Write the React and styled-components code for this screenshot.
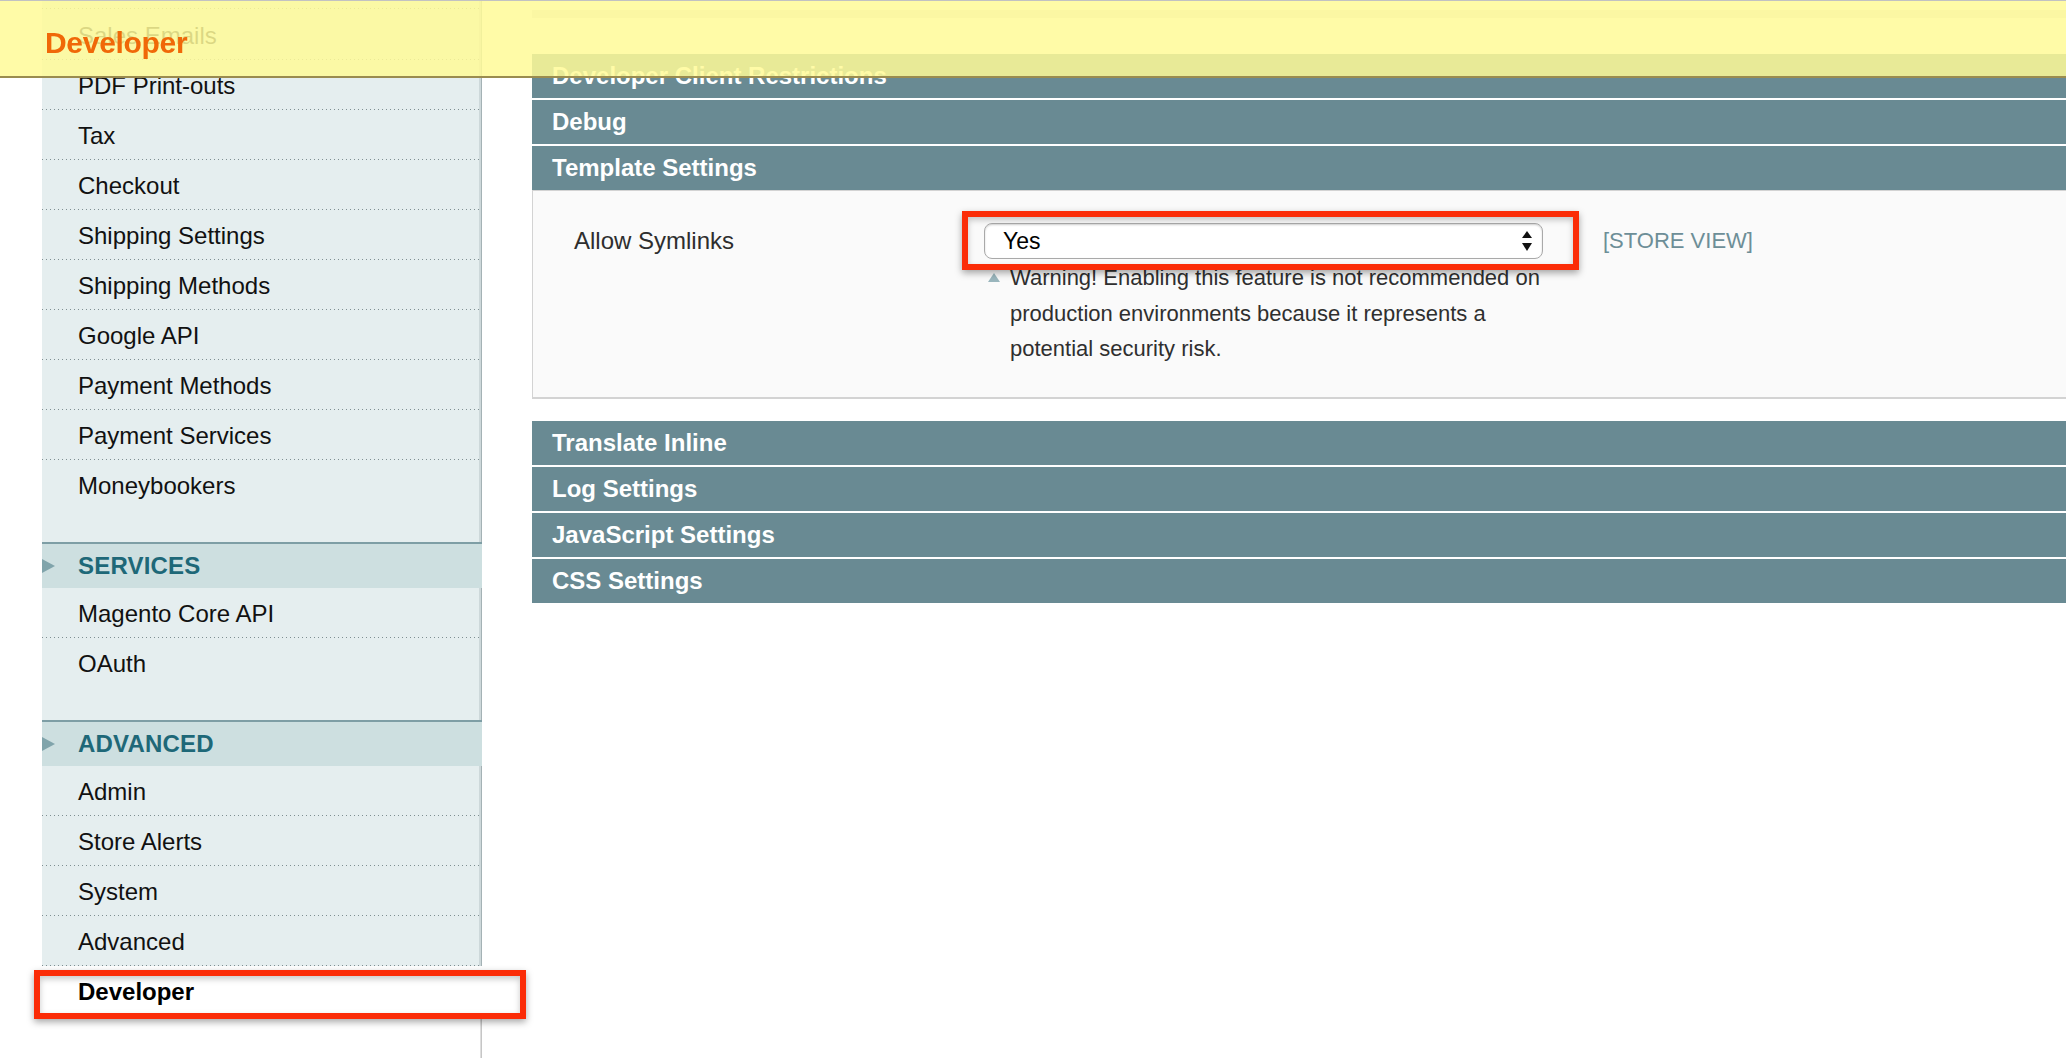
import React from 'react';
import styled, { createGlobalStyle } from 'styled-components';

const GlobalStyle = createGlobalStyle`
  html, body {
    margin: 0;
    padding: 0;
    background: #fff;
    overflow: hidden;
  }
  body {
    font-family: "Liberation Sans", Arial, Helvetica, sans-serif;
    color: #000;
  }
  * { box-sizing: border-box; }
`;

const Page = styled.div`
  display: flex;
  min-height: 100vh;
  padding-left: 42px;
  overflow: hidden;
`;

const FloatingHeader = styled.div`
  position: fixed;
  top: 0;
  left: 0;
  right: 0;
  height: 78px;
  border-top: 1px solid #c2c2c2;
  border-bottom: 2px solid #9a8c4f;
  background: rgba(255, 250, 152, 0.85);
  padding: 27px 0 0 45px;
  z-index: 10;
`;

const FloatingTitle = styled.h3`
  margin: 0;
  font-size: 30px;
  line-height: 1;
  font-weight: bold;
  letter-spacing: -0.3px;
  color: #f06808;
`;

/* ---------- sidebar ---------- */

const Sidebar = styled.aside`
  width: 440px;
  flex-shrink: 0;
  display: flex;
  flex-direction: column;
`;

const Group = styled.ul`
  list-style: none;
  margin: 0;
  padding: ${p => p.$top || 0}px 0 ${p => p.$bottom || 0}px 0;
  background: #e5eeef;
  box-shadow: inset -1px 0 0 #a4b2b5, inset -3px 0 0 #cdd8da;
`;

const dots = 'linear-gradient(to right, #7f8f92 1px, transparent 1px)';

const Item = styled.li`
  position: relative;
  height: 50px;
  line-height: 52px;
  padding-left: 36px;
  font-size: 24px;
  color: ${p => (p.$active ? '#000' : '#111')};
  font-weight: ${p => (p.$active ? 'bold' : 'normal')};
  background: ${p => (p.$active ? '#fff' : 'transparent')};
  background-image: ${p => (p.$last ? 'none' : dots)};
  background-repeat: repeat-x;
  background-size: 4px 1px;
  background-position: left bottom;

  ${p => p.$first && `
    &::before {
      content: '';
      position: absolute;
      left: 0;
      right: 3px;
      top: -2px;
      height: 1px;
      background: ${dots};
      background-size: 4px 1px;
    }
  `}

  ${p => p.$marked && `
    &::after {
      content: '';
      position: absolute;
      top: 4px;
      bottom: -3px;
      left: -8px;
      right: -44px;
      border: 6px solid #fb2c07;
      box-shadow: 0 3px 7px rgba(0, 0, 0, 0.35), inset 0 3px 6px rgba(0, 0, 0, 0.22);
      pointer-events: none;
    }
  `}
`;

const SectionHead = styled.div`
  display: flex;
  align-items: center;
  height: 46px;
  border-top: 2px solid #7e9ea5;
  background: #cddfe0;
  font-size: 24px;
  font-weight: bold;
  color: #1e6878;
  letter-spacing: 0.2px;

  svg {
    margin-right: 23px;
    flex-shrink: 0;
  }
`;

const Filler = styled.div`
  flex: 1;
  background: #fff;
  box-shadow: inset -1px 0 0 #c6c6c6, inset -2px 0 0 #dedede;
`;

const Arrow = () => (
  <svg width="13" height="14" viewBox="0 0 13 14">
    <path d="M0 0 L13 7 L0 14 Z" fill="#80a4ab" />
  </svg>
);

/* ---------- main column ---------- */

const Main = styled.main`
  flex: 1;
  margin-left: 50px;
  margin-right: -20px;
  padding-top: 10px;
  display: flex;
  flex-direction: column;
`;

const TopStrip = styled.div`
  height: 8px;
  background: #e0e0e0;
  margin-bottom: 36px;
`;

const SectionBar = styled.div`
  height: 44px;
  margin-bottom: ${p => (p.$open ? 0 : 2)}px;
  background: #698a93;
  color: #fff;
  font-size: 24px;
  font-weight: bold;
  padding-left: 20px;
  display: flex;
  align-items: center;
`;

const Fieldset = styled.div`
  background: #fafafa;
  border: 1px solid #d3d3d3;
  border-bottom-width: 2px;
  padding: 32px 0 30px 41px;
  margin-bottom: 22px;
`;

const FormRow = styled.div`
  display: flex;
  align-items: flex-start;
`;

const Label = styled.div`
  width: 410px;
  font-size: 24px;
  line-height: 36px;
  color: #2e2e2e;
`;

const ValueCol = styled.div`
  width: 559px;
  display: flex;
  flex-direction: column;
`;

const SelectWrap = styled.div`
  position: relative;

  &::after {
    content: '';
    position: absolute;
    top: -12px;
    bottom: -11px;
    left: -22px;
    right: -36px;
    border: 6px solid #fb2c07;
    box-shadow: 0 3px 7px rgba(0, 0, 0, 0.35), inset 0 3px 6px rgba(0, 0, 0, 0.22);
    pointer-events: none;
  }
`;

const SelectBox = styled.div`
  height: 36px;
  display: flex;
  align-items: center;
  justify-content: space-between;
  padding: 0 10px 0 18px;
  background: #fff;
  border: 1px solid #a9a9a9;
  border-radius: 8px;
  box-shadow: inset 0 1px 2px rgba(0, 0, 0, 0.18);
  font-size: 23px;
  color: #000;
`;

const Note = styled.div`
  display: flex;
  align-items: flex-start;
  padding-left: 4px;
  margin-top: 1px;

  svg {
    margin-top: 13px;
    margin-right: 10px;
    flex-shrink: 0;
  }
`;

const NoteText = styled.div`
  width: 545px;
  font-size: 22px;
  line-height: 35.5px;
  color: #2f2f2f;
`;

const Scope = styled.div`
  margin-left: 60px;
  font-size: 22px;
  line-height: 36px;
  color: #6d8e97;
`;

const SelectArrows = () => (
  <svg width="10" height="20" viewBox="0 0 10 20">
    <path d="M5 0 L10 7 L0 7 Z" fill="#111" />
    <path d="M0 12 L10 12 L5 20 Z" fill="#111" />
  </svg>
);

const NoteArrow = () => (
  <svg width="12" height="9" viewBox="0 0 12 9">
    <path d="M6 0 L12 9 L0 9 Z" fill="#9ab6bd" />
  </svg>
);

const salesItems = [
  'Sales Emails',
  'PDF Print-outs',
  'Tax',
  'Checkout',
  'Shipping Settings',
  'Shipping Methods',
  'Google API',
  'Payment Methods',
  'Payment Services',
  'Moneybookers',
];

const serviceItems = ['Magento Core API', 'OAuth'];
const advancedItems = ['Admin', 'Store Alerts', 'System', 'Advanced'];

const topSections = ['Developer Client Restrictions', 'Debug'];
const bottomSections = ['Translate Inline', 'Log Settings', 'JavaScript Settings', 'CSS Settings'];

export default function App() {
  return (
    <>
      <GlobalStyle />
      <FloatingHeader>
        <FloatingTitle>Developer</FloatingTitle>
      </FloatingHeader>
      <Page>
        <Sidebar>
          <Group $top={10} $bottom={32}>
            {salesItems.map((name, i) => (
              <Item key={name} $first={i === 0} $last={i === salesItems.length - 1}>
                {name}
              </Item>
            ))}
          </Group>
          <SectionHead>
            <Arrow />
            SERVICES
          </SectionHead>
          <Group $bottom={32}>
            {serviceItems.map((name, i) => (
              <Item key={name} $last={i === serviceItems.length - 1}>
                {name}
              </Item>
            ))}
          </Group>
          <SectionHead>
            <Arrow />
            ADVANCED
          </SectionHead>
          <Group>
            {advancedItems.map(name => (
              <Item key={name}>{name}</Item>
            ))}
            <Item $active $last $marked>
              Developer
            </Item>
          </Group>
          <Filler />
        </Sidebar>

        <Main>
          <TopStrip />
          {topSections.map(title => (
            <SectionBar key={title}>{title}</SectionBar>
          ))}
          <SectionBar $open>Template Settings</SectionBar>
          <Fieldset>
            <FormRow>
              <Label>Allow Symlinks</Label>
              <ValueCol>
                <SelectWrap>
                  <SelectBox>
                    <span>Yes</span>
                    <SelectArrows />
                  </SelectBox>
                </SelectWrap>
                <Note>
                  <NoteArrow />
                  <NoteText>
                    Warning! Enabling this feature is not recommended on production environments
                    because it represents a potential security risk.
                  </NoteText>
                </Note>
              </ValueCol>
              <Scope>[STORE VIEW]</Scope>
            </FormRow>
          </Fieldset>
          {bottomSections.map(title => (
            <SectionBar key={title}>{title}</SectionBar>
          ))}
        </Main>
      </Page>
    </>
  );
}
